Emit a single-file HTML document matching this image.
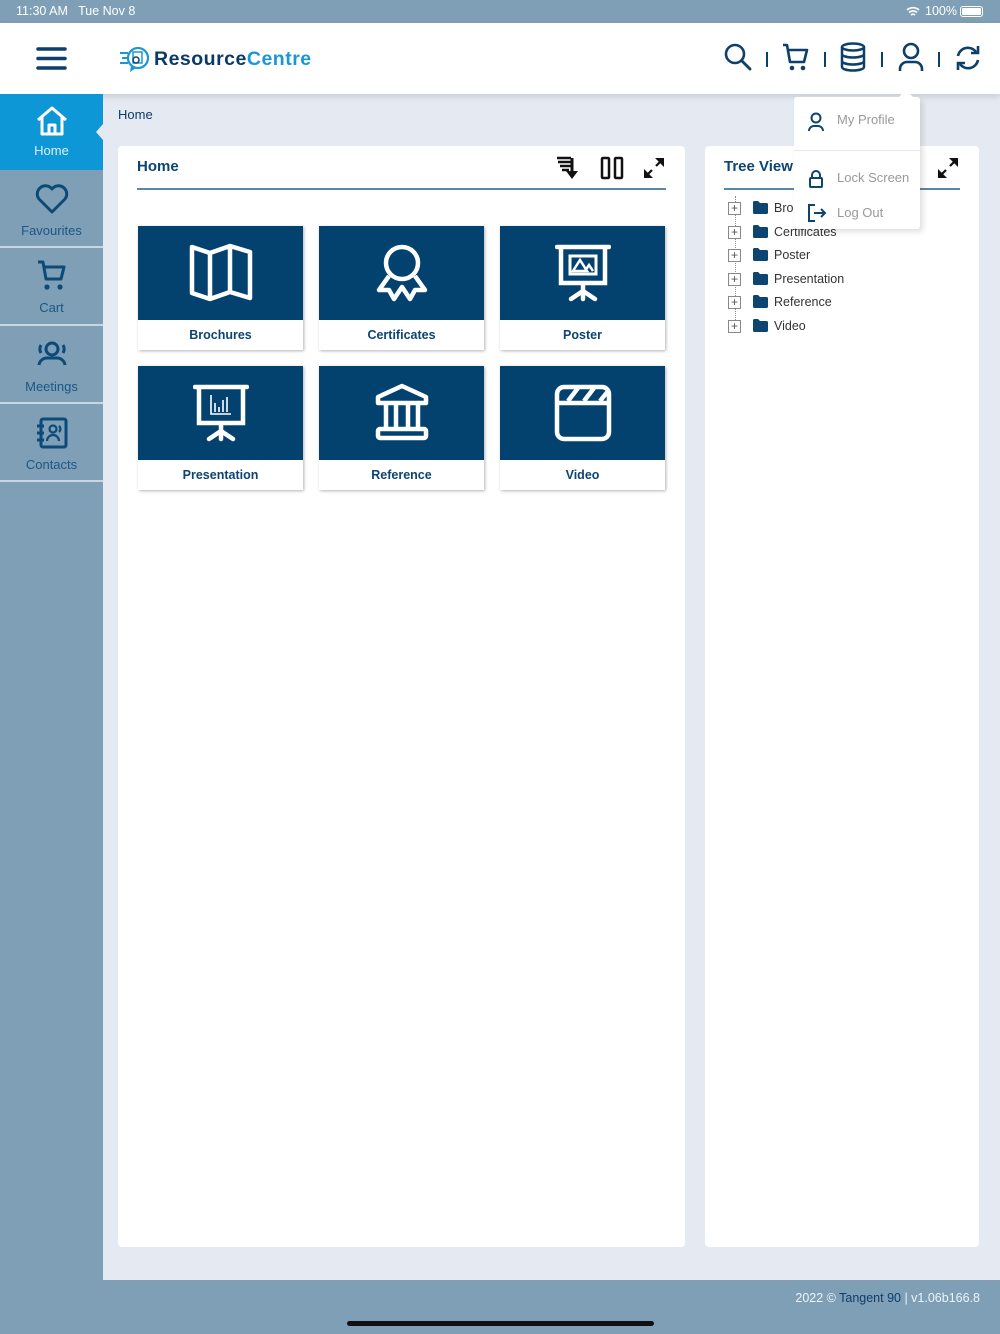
<!DOCTYPE html>
<html><head><meta charset="utf-8"><style>
*{margin:0;padding:0;box-sizing:border-box}
body{width:1000px;height:1334px;position:relative;overflow:hidden;background:#e5eaf2;font-family:"Liberation Sans",sans-serif;}
.abs{position:absolute}
#status{left:0;top:0;width:1000px;height:23px;background:#7f9fb6;color:#fff;font-size:12.5px}
#header{left:0;top:23px;width:1000px;height:71px;background:#fff;box-shadow:0 3px 6px rgba(0,0,0,.12)}
#side{left:0;top:94px;width:103px;height:1186px;background:#7f9fb6}
.nav{position:absolute;left:0;width:103px;height:77px;border-bottom:2px solid #c8d6e2;text-align:center;color:#1a5787;font-size:13px}
.nav svg{display:block;margin:12px auto 5px}
#footer{left:0;top:1280px;width:1000px;height:54px;background:#7f9fb6}
.card{background:#fff;border-radius:4px}
.ttl{font-weight:bold;color:#0c4472;font-size:15px}
.tile{position:absolute;width:165px;height:124px;background:#fff;box-shadow:1px 1px 3px rgba(0,0,0,.3)}
.tile .top{height:94px;background:#03426f;display:flex;align-items:center;justify-content:center}
.tile .lbl{text-align:center;color:#0c4472;font-size:12.5px;font-weight:bold;line-height:30px}
.tr{position:absolute;left:728px;font-size:12.5px;color:#333;height:16px;line-height:16px}
.tr .bx{position:absolute;left:0;top:2px;width:13px;height:13px;border:1px solid #888;font-size:12px;line-height:10px;text-align:center;color:#555;background:#fff}
.tr .fd{position:absolute;left:25px;top:1px;width:15px;height:13px}
.tr .tx{position:absolute;left:46px;white-space:nowrap}
</style></head><body>
<div id="status" class="abs">
<span class="abs" style="left:16px;top:4px">11:30 AM&nbsp;&nbsp; Tue Nov 8</span>
<svg class="abs" style="left:906px;top:6px" width="14" height="11" viewBox="0 0 14 11"><path d="M1 4a9 9 0 0 1 12 0M3 6.5a6 6 0 0 1 8 0M5 9a3 3 0 0 1 4 0" stroke="#fff" stroke-width="1.6" fill="none"/></svg>
<span class="abs" style="left:925px;top:4px">100%</span>
<div class="abs" style="left:960px;top:6px;width:23px;height:11px;border:1px solid #fff;border-radius:3px;padding:1px"><div style="width:100%;height:100%;background:#fff;border-radius:1px"></div></div>
</div>
<div id="header" class="abs">
<svg class="abs" style="left:36px;top:23px" width="31" height="26"><path d="M2 3h27M2 12.5h27M2 22h27" stroke="#0c3f6a" stroke-width="3.5" stroke-linecap="round"/></svg>
<svg class="abs" style="left:118px;top:22px" width="34" height="28" viewBox="0 0 34 28"><path d="M2 8h8M4 13h6M2 18h8" stroke="#1a98d5" stroke-width="2"/><circle cx="20" cy="13" r="10" fill="none" stroke="#1a98d5" stroke-width="2.2"/><path d="M13 21l-1 6 6-4" fill="#1a98d5"/><rect x="15" y="7" width="9" height="11" fill="none" stroke="#1a98d5" stroke-width="1.5"/><circle cx="18" cy="15" r="3" fill="none" stroke="#0c4472" stroke-width="1.5"/></svg>
<div class="abs" style="left:154px;top:25px;font-size:19.5px;font-weight:bold;letter-spacing:0.5px"><span style="color:#0c3a66">Resource</span><span style="color:#1a98d5">Centre</span></div>
<svg class="abs" style="left:723px;top:19px" width="30" height="30" viewBox="0 0 30 30"><circle cx="12" cy="12" r="9" fill="none" stroke="#0c3f6a" stroke-width="2.6"/><path d="M19 19l8 8" stroke="#0c3f6a" stroke-width="2.8" stroke-linecap="round"/></svg>
<div class="abs" style="left:766px;top:29px;width:2px;height:15px;background:#0c3f6a"></div>
<svg class="abs" style="left:781px;top:19px" width="30" height="30" viewBox="0 0 30 30"><path d="M2 3h4l3 17h14l3-12H8" fill="none" stroke="#0c3f6a" stroke-width="2.6" stroke-linejoin="round"/><circle cx="11" cy="26" r="2.3" fill="#0c3f6a"/><circle cx="22" cy="26" r="2.3" fill="#0c3f6a"/></svg>
<div class="abs" style="left:824px;top:29px;width:2px;height:15px;background:#0c3f6a"></div>
<svg class="abs" style="left:840px;top:19px" width="26" height="30" viewBox="0 0 26 30"><ellipse cx="13" cy="5" rx="11" ry="3.5" fill="none" stroke="#0c3f6a" stroke-width="2.5"/><path d="M2 5v20c0 2 5 3.5 11 3.5s11-1.5 11-3.5V5M2 12c0 2 5 3.5 11 3.5S24 14 24 12M2 19c0 2 5 3.5 11 3.5s11-1.5 11-3.5" fill="none" stroke="#0c3f6a" stroke-width="2.5"/></svg>
<div class="abs" style="left:881px;top:29px;width:2px;height:15px;background:#0c3f6a"></div>
<svg class="abs" style="left:897px;top:19px" width="28" height="30" viewBox="0 0 28 30"><circle cx="14" cy="9" r="7" fill="none" stroke="#0c3f6a" stroke-width="2.6"/><path d="M3 29v-2a7 7 0 0 1 7-7h8a7 7 0 0 1 7 7v2" fill="none" stroke="#0c3f6a" stroke-width="2.6"/></svg>
<div class="abs" style="left:938px;top:29px;width:2px;height:15px;background:#0c3f6a"></div>
<svg class="abs" style="left:954px;top:21px" width="28" height="28" viewBox="0 0 28 28"><path d="M4 12a10 10 0 0 1 18-4M24 16a10 10 0 0 1-18 4" fill="none" stroke="#0c3f6a" stroke-width="2.6"/><path d="M17 9h7V2M11 19H4v7" fill="none" stroke="#0c3f6a" stroke-width="2.6"/></svg>
</div>
<div id="side" class="abs">
<div class="nav" style="top:0;height:76px;background:#0e97d6;color:#dbefff;border-bottom:none">
<svg width="34" height="34" viewBox="0 0 34 34" style="margin-top:10px"><path d="M3 16L17 4l14 12M7 13v17h20V13M14 30v-9h6v9" fill="none" stroke="#fff" stroke-width="3" stroke-linejoin="round"/></svg>Home</div>
<div class="abs" style="left:96px;top:30px;width:0;height:0;border-top:8px solid transparent;border-bottom:8px solid transparent;border-right:7px solid #e5eaf2"></div>
<div class="nav" style="top:77px"><svg width="34" height="32" viewBox="0 0 34 32" style="margin-top:12px;margin-bottom:8px"><path d="M17 29L4 16A8 8 0 0 1 17 6a8 8 0 0 1 13 10z" fill="none" stroke="#0c4a78" stroke-width="3" stroke-linejoin="round"/></svg>Favourites</div>
<div class="nav" style="top:155px"><svg width="34" height="34" viewBox="0 0 34 34" style="margin-top:10px;margin-bottom:7px"><path d="M3 3h5l3 17h15l3-12H9" fill="none" stroke="#0c4a78" stroke-width="3" stroke-linejoin="round"/><circle cx="12" cy="28" r="2.6" fill="#0c4a78"/><circle cx="25" cy="28" r="2.6" fill="#0c4a78"/></svg>Cart</div>
<div class="nav" style="top:233px"><svg width="34" height="32" viewBox="0 0 34 32" style="margin-top:12px;margin-bottom:8px"><circle cx="17" cy="10" r="6" fill="none" stroke="#0c4a78" stroke-width="3"/><path d="M6 6a8 8 0 0 0 0 8M28 6a8 8 0 0 1 0 8M4 26a8 8 0 0 1 8-7h10a8 8 0 0 1 8 7" fill="none" stroke="#0c4a78" stroke-width="3"/></svg>Meetings</div>
<div class="nav" style="top:311px"><svg width="34" height="34" viewBox="0 0 34 34" style="margin-top:11px;margin-bottom:7px"><rect x="6" y="3" width="25" height="28" rx="2" fill="none" stroke="#0c4a78" stroke-width="3"/><path d="M2 10h7M2 17h7M2 24h7" stroke="#0c4a78" stroke-width="3"/><circle cx="18" cy="13" r="3.5" fill="none" stroke="#0c4a78" stroke-width="2.2"/><path d="M12 25a6 6 0 0 1 12 0M24 10a4 4 0 0 1 0 6" fill="none" stroke="#0c4a78" stroke-width="2.2"/></svg>Contacts</div>
</div>
<div class="abs" style="left:118px;top:107px;font-size:13px;color:#0c3a66">Home</div>
<div class="abs card" style="left:118px;top:146px;width:567px;height:1101px"></div>
<div class="abs ttl" style="left:137px;top:158px">Home</div>
<div class="abs" style="left:137px;top:188px;width:529px;height:2px;background:#5b86a6"></div>
<svg class="abs" style="left:555px;top:155px" width="24" height="26" viewBox="0 0 24 26"><path d="M2 3h14M3 7h13M5 11h11M7 15h7" stroke="#111" stroke-width="2.5"/><path d="M17 3v15" stroke="#111" stroke-width="3"/><path d="M11 16h12l-6 8z" fill="#111"/></svg>
<svg class="abs" style="left:600px;top:156px" width="24" height="24" viewBox="0 0 24 24"><rect x="2" y="2" width="7" height="20" rx="1" fill="none" stroke="#111" stroke-width="2.5"/><rect x="15" y="2" width="7" height="20" rx="1" fill="none" stroke="#111" stroke-width="2.5"/></svg>
<svg class="abs" style="left:642px;top:156px" width="24" height="24" viewBox="0 0 24 24"><path d="M3 21l7-7M14 10l7-7" stroke="#111" stroke-width="2.2"/><path d="M2 13v9h9z M22 11V2h-9z" fill="#111"/></svg>

<div class="tile" style="left:138px;top:226px"><div class="top"><svg width="64" height="60" viewBox="0 0 64 60"><path d="M3 4l18 6 20-7 20 6v46l-20-6-20 7-18-6z M21 10v47 M41 3v46" fill="none" stroke="#fff" stroke-width="4.5" stroke-linejoin="round"/></svg></div><div class="lbl">Brochures</div></div>
<div class="tile" style="left:319px;top:226px"><div class="top"><svg width="56" height="60" viewBox="0 0 56 60"><circle cx="28" cy="20" r="16" fill="none" stroke="#fff" stroke-width="4.5"/><path d="M15 33l-10 14h10l5 9 8-12 8 12 5-9h10L41 33" fill="none" stroke="#fff" stroke-width="4.5" stroke-linejoin="round"/></svg></div><div class="lbl">Certificates</div></div>
<div class="tile" style="left:500px;top:226px"><div class="top"><svg width="56" height="60" viewBox="0 0 56 60"><path d="M2 4h52M6 4v36h44V4M28 40v16M28 48l-12 8M28 48l12 8" fill="none" stroke="#fff" stroke-width="4.5" stroke-linecap="round"/><rect x="15" y="13" width="26" height="18" fill="none" stroke="#fff" stroke-width="3"/><path d="M18 28l7-11 7 11zM30 28l4-6 4 6" fill="none" stroke="#fff" stroke-width="2.5"/></svg></div><div class="lbl">Poster</div></div>
<div class="tile" style="left:138px;top:366px"><div class="top"><svg width="56" height="60" viewBox="0 0 56 60"><path d="M2 4h52M6 4v36h44V4M28 40v16M28 48l-12 8M28 48l12 8" fill="none" stroke="#fff" stroke-width="4.5" stroke-linecap="round"/><path d="M18 12v19h20M22 20v9M26 24v5M30 17v12M34 14v15" stroke="#fff" stroke-width="1.6" fill="none"/></svg></div><div class="lbl">Presentation</div></div>
<div class="tile" style="left:319px;top:366px"><div class="top"><svg width="56" height="60" viewBox="0 0 56 60"><path d="M4 14L28 3l24 11v6H4z" fill="none" stroke="#fff" stroke-width="4.5" stroke-linejoin="round"/><path d="M12 22v22M22 22v22M34 22v22M44 22v22" stroke="#fff" stroke-width="4.5"/><rect x="4" y="46" width="48" height="9" rx="2" fill="none" stroke="#fff" stroke-width="4.5"/></svg></div><div class="lbl">Reference</div></div>
<div class="tile" style="left:500px;top:366px"><div class="top"><svg width="58" height="58" viewBox="0 0 58 58"><rect x="3" y="3" width="52" height="52" rx="7" fill="none" stroke="#fff" stroke-width="4.5"/><path d="M3 19h52M14 17l10-13M30 17l10-13M46 17l9-11" stroke="#fff" stroke-width="4.5"/></svg></div><div class="lbl">Video</div></div>

<div class="abs card" style="left:705px;top:146px;width:274px;height:1101px"></div>
<div class="abs ttl" style="left:724px;top:158px">Tree View</div>
<div class="abs" style="left:724px;top:188px;width:236px;height:2px;background:#5b86a6"></div>
<svg class="abs" style="left:936px;top:156px" width="24" height="24" viewBox="0 0 24 24"><path d="M3 21l7-7M14 10l7-7" stroke="#111" stroke-width="2.2"/><path d="M2 13v9h9z M22 11V2h-9z" fill="#111"/></svg>
<div class="abs" style="left:735px;top:196px;width:0;height:130px;border-left:1px dotted #888"></div>
<svg width="0" height="0" style="position:absolute"><defs><symbol id="fd" viewBox="0 0 15 13"><path d="M0 1.5Q0 0 1.5 0H5l2 2h6.5Q15 2 15 3.5v8Q15 13 13.5 13h-12Q0 13 0 11.5z" fill="#0c4472"/></symbol></defs></svg>
<div class="tr" style="top:200px"><div class="bx">+</div><svg class="fd"><use href="#fd"/></svg><div class="tx">Brochures</div></div>
<div class="tr" style="top:224px"><div class="bx">+</div><svg class="fd"><use href="#fd"/></svg><div class="tx">Certificates</div></div>
<div class="tr" style="top:247px"><div class="bx">+</div><svg class="fd"><use href="#fd"/></svg><div class="tx">Poster</div></div>
<div class="tr" style="top:271px"><div class="bx">+</div><svg class="fd"><use href="#fd"/></svg><div class="tx">Presentation</div></div>
<div class="tr" style="top:294px"><div class="bx">+</div><svg class="fd"><use href="#fd"/></svg><div class="tx">Reference</div></div>
<div class="tr" style="top:318px"><div class="bx">+</div><svg class="fd"><use href="#fd"/></svg><div class="tx">Video</div></div>

<div class="abs" style="left:794px;top:97px;width:126px;height:132px;background:#fff;border-radius:3px;box-shadow:3px 3px 6px rgba(0,0,0,.12)"></div>
<div class="abs" style="left:898px;top:90px;width:0;height:0;border-left:8px solid transparent;border-right:8px solid transparent;border-bottom:8px solid #fff"></div>
<div class="abs" style="left:794px;top:150px;width:126px;height:1px;background:#e8e8e8"></div>
<svg class="abs" style="left:807px;top:112px" width="18" height="20" viewBox="0 0 18 20"><circle cx="9" cy="6" r="4.5" fill="none" stroke="#0c4472" stroke-width="2"/><path d="M2 19a5 5 0 0 1 5-5h4a5 5 0 0 1 5 5" fill="none" stroke="#0c4472" stroke-width="2"/></svg>
<div class="abs" style="left:837px;top:112px;font-size:13px;color:#999">My Profile</div>
<svg class="abs" style="left:807px;top:169px" width="18" height="20" viewBox="0 0 18 20"><rect x="3" y="9" width="12" height="9" rx="1" fill="none" stroke="#0c4472" stroke-width="2"/><path d="M5 9V6a4 4 0 0 1 8 0v3" fill="none" stroke="#0c4472" stroke-width="2"/></svg>
<div class="abs" style="left:837px;top:170px;font-size:13px;color:#999">Lock Screen</div>
<svg class="abs" style="left:807px;top:203px" width="20" height="20" viewBox="0 0 20 20"><path d="M8 2H2v16h6M7 10h11M14 6l4 4-4 4" fill="none" stroke="#0c4472" stroke-width="2"/></svg>
<div class="abs" style="left:837px;top:205px;font-size:13px;color:#999">Log Out</div>

<div id="footer" class="abs"><div class="abs" style="right:20px;top:11px;font-size:12.5px;color:#eef3f8;white-space:nowrap">2022 © <span style="color:#0c3f6a">Tangent 90</span> | v1.06b166.8</div></div>
<div class="abs" style="left:347px;top:1321px;width:307px;height:5px;border-radius:3px;background:#111"></div>
</body></html>
